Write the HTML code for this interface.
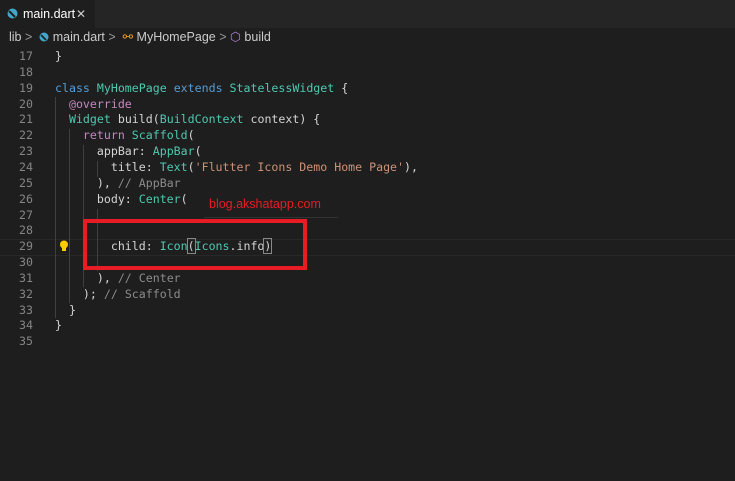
<!DOCTYPE html>
<html><head><meta charset="utf-8"><style>
*{margin:0;padding:0;box-sizing:border-box}
body{width:735px;height:481px;background:#1e1e1e;overflow:hidden;position:relative;font-family:"Liberation Sans",sans-serif}
.tabbar{position:absolute;left:0;top:0;width:735px;height:28px;background:#252526}
.tab{position:absolute;left:0;top:0;width:95px;height:28px;background:#1e1e1e;color:#fff;font-size:12.5px;line-height:28px;padding-left:23px;white-space:nowrap}
.crumb{position:absolute;left:0;top:28px;height:18px;width:735px;color:#ccc;font-size:12.5px;line-height:18px;padding-left:9px;white-space:nowrap}
.code{position:absolute;left:0;top:49px;font-family:"DejaVu Sans Mono",monospace;font-size:11.6px;line-height:15.85px;white-space:pre;color:#d4d4d4}
.ln{position:absolute;left:0;width:33px;text-align:right;color:#858585}
.tx{position:absolute;left:55px}
.k{color:#569cd6}.t{color:#4ec9b0}.p{color:#c586c0}.s{color:#ce9178}.c{color:#8b8b8b}.v{color:#9cdcfe}.g{color:#ffd700}
.guide{position:absolute;width:1px;background:#404040}
</style></head><body>
<div class="tabbar"><div class="tab">main.dart<span style="position:absolute;left:76px;color:#ccc;font-size:12px">✕</span></div>
<svg style="position:absolute;left:7px;top:8px" width="11" height="11"><circle cx="5.5" cy="5.5" r="5" fill="#42a5c9"/><path d="M2 3 L8 9" stroke="#1e1e1e" stroke-width="2"/></svg></div>
<div class="crumb">lib <span style="color:#999">&gt;</span>&nbsp; <svg width="10" height="10" style="vertical-align:-1px"><circle cx="5" cy="5" r="4.5" fill="#42a5c9"/><path d="M2 3 L7 8" stroke="#1e1e1e" stroke-width="1.6"/></svg>&nbsp;main.dart <span style="color:#999">&gt;</span>&nbsp; <span style="color:#ee9d28">⚯</span>&nbsp;MyHomePage <span style="color:#999">&gt;</span> <span style="color:#b180d7">⬡</span> build</div>
<div style="position:absolute;left:0;top:239px;width:735px;height:17px;border-top:1px solid #282828;border-bottom:1px solid #282828"></div>
<div class="guide" style="left:55px;top:97px;height:221px"></div>
<div class="guide" style="left:69px;top:129px;height:174px"></div>
<div class="guide" style="left:83px;top:145px;height:142px"></div>
<div class="guide" style="left:97px;top:209px;height:62px"></div>
<div class="guide" style="left:97px;top:161px;height:16px"></div>
<div style="position:absolute;left:204px;top:217px;width:134px;height:1px;background:#333"></div>
<div class="code">
<div class="ln" style="top:0">17</div><div class="tx" style="top:0">}</div>
<div class="ln" style="top:15.85px">18</div>
<div class="ln" style="top:31.7px">19</div><div class="tx" style="top:31.7px"><span class="k">class</span> <span class="t">MyHomePage</span> <span class="k">extends</span> <span class="t">StatelessWidget</span> {</div>
<div class="ln" style="top:47.55px">20</div><div class="tx" style="top:47.55px">  <span class="p">@override</span></div>
<div class="ln" style="top:63.4px">21</div><div class="tx" style="top:63.4px">  <span class="t">Widget</span> build(<span class="t">BuildContext</span> context) {</div>
<div class="ln" style="top:79.25px">22</div><div class="tx" style="top:79.25px">    <span class="p">return</span> <span class="t">Scaffold</span>(</div>
<div class="ln" style="top:95.1px">23</div><div class="tx" style="top:95.1px">      appBar: <span class="t">AppBar</span>(</div>
<div class="ln" style="top:110.95px">24</div><div class="tx" style="top:110.95px">        title: <span class="t">Text</span>(<span class="s">'Flutter Icons Demo Home Page'</span>),</div>
<div class="ln" style="top:126.8px">25</div><div class="tx" style="top:126.8px">      ), <span class="c">// AppBar</span></div>
<div class="ln" style="top:142.65px">26</div><div class="tx" style="top:142.65px">      body: <span class="t">Center</span>(</div>
<div class="ln" style="top:158.5px">27</div>
<div class="ln" style="top:174.35px">28</div>
<div class="ln" style="top:190.2px">29</div><div class="tx" style="top:190.2px">        child: <span class="t">Icon</span><span style="outline:1px solid #888">(</span><span class="t">Icons</span>.info<span style="outline:1px solid #888">)</span></div>
<div class="ln" style="top:206.05px">30</div>
<div class="ln" style="top:221.9px">31</div><div class="tx" style="top:221.9px">      ), <span class="c">// Center</span></div>
<div class="ln" style="top:237.75px">32</div><div class="tx" style="top:237.75px">    ); <span class="c">// Scaffold</span></div>
<div class="ln" style="top:253.6px">33</div><div class="tx" style="top:253.6px">  }</div>
<div class="ln" style="top:269.45px">34</div><div class="tx" style="top:269.45px">}</div>
<div class="ln" style="top:285.3px">35</div>
</div>
<svg style="position:absolute;left:59px;top:240px" width="10" height="13"><circle cx="5" cy="4.5" r="4" fill="#ffcc00"/><rect x="3" y="8" width="4" height="3" fill="#ffcc00"/></svg>
<div style="position:absolute;left:209px;top:197px;color:#e81c24;font-size:12.5px">blog.akshatapp.com</div>
<div style="position:absolute;left:83px;top:219px;width:224px;height:51px;border:4px solid #e81c24"></div>
</body></html>
